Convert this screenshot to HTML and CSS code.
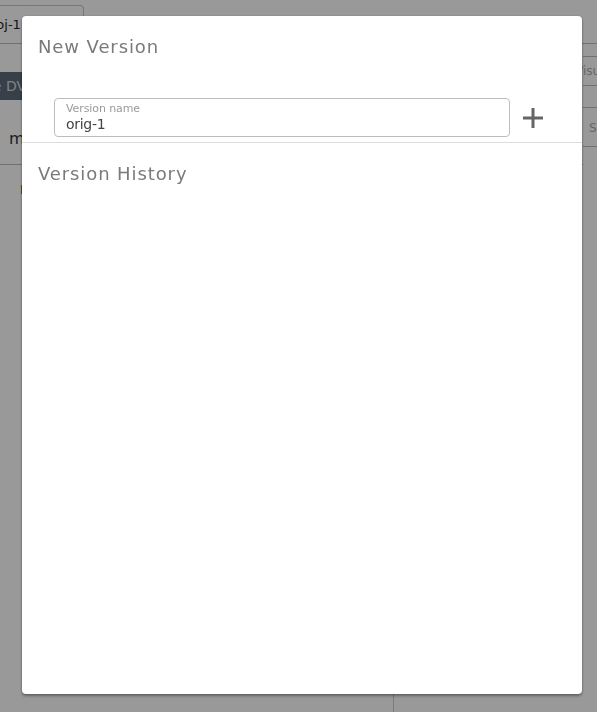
FILE: index.html
```html
<!DOCTYPE html>
<html>
<head>
<meta charset="utf-8">
<link rel="stylesheet" href="styles.css">
</head>
<body>
<div class="app">
  <div class="topbar">
    <div class="tab">proj-1</div>
  </div>
  <div class="main">
    <div class="left">
      <div class="dvbtn">Create DV</div>
      <div class="mrow">m</div>
      <div class="orange"></div>
    </div>
    <div class="right">
      <div class="rrow r1">Visualize</div>
      <div class="rrow r2">Search</div>
    </div>
  </div>
  <div class="bottom-split"></div>
</div>

<div class="overlay">
  <div class="modal">
    <h2 class="title">New Version</h2>
    <div class="form-row">
      <label class="field">
        <span class="field-label">Version name</span>
        <span class="field-value">orig-1</span>
      </label>
      <button class="add-btn" aria-label="Add">
        <svg width="22" height="22" viewBox="0 0 22 22"><path d="M11 1v20M1 11h20" stroke="#666" stroke-width="3" fill="none"/></svg>
      </button>
    </div>
    <div class="divider"></div>
    <h2 class="title history">Version History</h2>
  </div>
</div>
</body>
</html>
```

FILE: styles.css
```css
html, body {
  margin: 0;
  padding: 0;
  height: 100%;
  background: #fff;
  font-family: "DejaVu Sans", sans-serif;
  overflow: hidden;
}

.app {
  height: 712px;
  position: relative;
  overflow: hidden;
}

.topbar {
  height: 43px;
  border-bottom: 1px solid #bdbdbd;
  display: flex;
  align-items: flex-end;
}
.tab {
  margin-left: -20px;
  width: 104px;
  height: 38px;
  border: 1px solid #c8c8c8;
  border-bottom: none;
  border-radius: 4px 4px 0 0;
  font-size: 13px;
  color: #222;
  display: flex;
  align-items: center;
  padding-left: 2px;
  box-sizing: border-box;
}

.main {
  display: flex;
}
.left {
  flex: 1;
}
.dvbtn {
  margin-top: 28px;
  width: 80px;
  margin-left: -50px;
  height: 28px;
  background: #5c6b7a;
  color: #d8d8d8;
  font-size: 14px;
  display: flex;
  align-items: center;
  justify-content: flex-end;
  padding-right: 4px;
  box-sizing: border-box;
}
.mrow {
  height: 65px;
  border-bottom: 1px solid #bcbcbc;
  font-size: 16px;
  color: #333;
  padding-left: 9px;
  padding-bottom: 16px;
  box-sizing: border-box;
  display: flex;
  align-items: flex-end;
}
.orange {
  margin: 20px 0 0 21px;
  width: 3px;
  height: 9px;
  background: #b07a10;
}
.right {
  width: 14px;
}
.rrow {
  font-size: 12px;
  color: #aaa;
  white-space: nowrap;
}
.r1 {
  margin-top: 12px;
  height: 28px;
  border-top: 1px solid #bbb;
  border-bottom: 1px solid #bbb;
  text-indent: -8px;
  line-height: 28px;
}
.r2 {
  margin-top: 21px;
  height: 38px;
  border-top: 1px solid #bbb;
  border-bottom: 1px solid #bbb;
  line-height: 40px;
  text-indent: 6px;
}
.bottom-split {
  position: absolute;
  left: 393px;
  top: 560px;
  bottom: 0;
  width: 1px;
  background: #ccc;
}

.overlay {
  position: fixed;
  inset: 0;
  background: rgba(0, 0, 0, 0.4);
  padding: 16px 15px 18px 22px;
  box-sizing: border-box;
}

.modal {
  height: 100%;
  background: #fff;
  border-radius: 4px;
  box-shadow: 0 2px 3px rgba(0,0,0,0.35), 0 0 2px rgba(0,0,0,0.2);
  display: flex;
  flex-direction: column;
}

.title {
  margin: 0;
  font-weight: normal;
  font-size: 18px;
  color: #7a7a7a;
  letter-spacing: 0.9px;
  padding: 19px 16px 0;
  line-height: 24px;
}
.title.history {
  padding-top: 19px;
}

.form-row {
  display: flex;
  align-items: center;
  padding: 39px 0 0 32px;
}
.field {
  width: 456px;
  height: 39px;
  border: 1px solid #bdbdbd;
  border-radius: 4px;
  box-sizing: border-box;
  display: flex;
  flex-direction: column;
  padding: 3px 11px 0;
}
.field-label {
  font-size: 11px;
  color: #9a9a9a;
  line-height: 13px;
  letter-spacing: -0.1px;
}
.field-value {
  font-size: 14px;
  color: #444;
  line-height: 19px;
  letter-spacing: -0.3px;
}
.add-btn {
  margin-left: 12px;
  border: none;
  background: none;
  padding: 0;
  width: 22px;
  height: 22px;
  display: flex;
}

.divider {
  margin-top: 5px;
  height: 1px;
  background: #dcdcdc;
}
```
